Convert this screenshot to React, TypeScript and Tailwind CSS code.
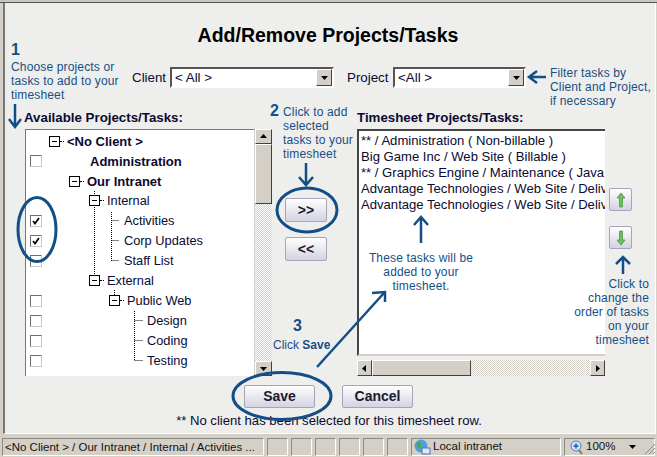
import React from "react";

const treeRows = [
  { label: "<No Client >", bold: true, box: false, checked: false, expander: true, indent: "ml-[7px]" },
  { label: "Administration", bold: true, box: true, checked: false, expander: false, indent: "ml-[48px]" },
  { label: "Our Intranet", bold: true, box: false, checked: false, expander: true, indent: "ml-[27px]" },
  { label: "Internal", bold: false, box: false, checked: false, expander: true, indent: "ml-[47px]" },
  { label: "Activities", bold: false, box: true, checked: true, expander: false, indent: "ml-[82px]" },
  { label: "Corp Updates", bold: false, box: true, checked: true, expander: false, indent: "ml-[82px]" },
  { label: "Staff List", bold: false, box: true, checked: false, expander: false, indent: "ml-[82px]" },
  { label: "External", bold: false, box: false, checked: false, expander: true, indent: "ml-[47px]" },
  { label: "Public Web", bold: false, box: true, checked: false, expander: true, indent: "ml-[67px]" },
  { label: "Design", bold: false, box: true, checked: false, expander: false, indent: "ml-[105px]" },
  { label: "Coding", bold: false, box: true, checked: false, expander: false, indent: "ml-[105px]" },
  { label: "Testing", bold: false, box: true, checked: false, expander: false, indent: "ml-[105px]" },
  { label: "Advantage Technologies", bold: true, box: false, checked: false, expander: false, indent: "ml-[28px]" },
];

const timesheetRows = [
  "** / Administration ( Non-billable )",
  "Big Game Inc / Web Site ( Billable )",
  "** / Graphics Engine / Maintenance ( Java",
  "Advantage Technologies / Web Site / Delivery",
  "Advantage Technologies / Web Site / Delivery",
];

const raised = "border border-t-white border-l-white border-r-[#404040] border-b-[#404040] bg-[#d4d0c8]";
const track = "bg-[repeating-conic-gradient(#d4d0c8_0%_25%,#ffffff_0%_50%)] bg-[length:2px_2px]";
const note = "absolute text-[12px] leading-[14px] tracking-[0.15px] text-[#164f86]";
const sunken = "border border-t-[#8a8a84] border-l-[#8a8a84] border-r-white border-b-white";

function Triangle({ dir }: { dir: "up" | "down" | "left" | "right" }) {
  const points = {
    up: "1,6 8,6 4.5,2",
    down: "1,3 8,3 4.5,7",
    left: "6,1 6,8 2,4.5",
    right: "3,1 3,8 7,4.5",
  }[dir];
  return (
    <svg width="9" height="9" viewBox="0 0 9 9">
      <polygon points={points} fill="#000" />
    </svg>
  );
}

function Select({ label, className }: { label: string; className: string }) {
  return (
    <div className={`flex h-[21px] items-center border-2 border-t-[#555] border-l-[#555] border-r-white border-b-white bg-white ${className}`}>
      <span className="flex-1 pl-[3px] text-[13.33px] leading-none">{label}</span>
      <div className={`flex h-[17px] w-[16px] items-center justify-center ${raised}`}>
        <Triangle dir="down" />
      </div>
    </div>
  );
}

function Checkbox({ checked }: { checked: boolean }) {
  return (
    <div className="flex h-3 w-3 items-center justify-center border border-t-[#6f6f6f] border-l-[#6f6f6f] border-r-[#c8c8c8] border-b-[#c8c8c8] bg-white">
      {checked && (
        <svg width="8" height="8" viewBox="0 0 8 8">
          <path d="M1 4 L3 6.5 L7 1" fill="none" stroke="#000" strokeWidth="1.7" />
        </svg>
      )}
    </div>
  );
}

function Expander() {
  return (
    <div className="relative mr-[7px] flex h-[11px] w-[11px] shrink-0 items-center justify-center border border-black bg-white">
      <div className="h-px w-[5px] bg-black" />
      <div className="absolute left-[10px] top-1 w-[4px] border-t border-dotted border-black" />
    </div>
  );
}

function PushButton({ label, className }: { label: string; className: string }) {
  return (
    <div className={`flex items-center justify-center rounded-[2px] border border-[#a5a5ba] bg-gradient-to-b from-white to-[#d3d3e2] text-[#1a1a2e] ${className}`}>
      {label}
    </div>
  );
}

function MoveButton({ up }: { up: boolean }) {
  return (
    <div className="flex h-[23px] w-[23px] items-center justify-center rounded-[2px] border border-[#a5a5ba] bg-gradient-to-b from-white to-[#d3d3e2]">
      <svg width="10" height="16" viewBox="0 0 10 16">
        <path
          d={up ? "M5 1 L9 6 L6.5 6 L6.5 15 L3.5 15 L3.5 6 L1 6 Z" : "M5 15 L9 10 L6.5 10 L6.5 1 L3.5 1 L3.5 10 L1 10 Z"}
          fill="#6fc05a"
          stroke="#3f8f3a"
          strokeWidth="0.7"
        />
      </svg>
    </div>
  );
}

function Annotations() {
  const stroke = "#134f86";
  return (
    <svg className="pointer-events-none absolute inset-0" width="657" height="457" fill="none" stroke={stroke}>
      <g strokeWidth="3">
        <ellipse cx="37" cy="229.5" rx="19" ry="32" />
        <ellipse cx="307" cy="210" rx="30" ry="22" />
        <ellipse cx="282" cy="396" rx="49" ry="23.5" />
      </g>
      <g strokeWidth="2.5">
        <path d="M15 104 V126 M9 119 L15 127 L21 119" />
        <path d="M306 163 V184 M299 177 L306 185 L313 177" />
        <path d="M546 77 H530 M537 71 L529 77 L537 83" />
        <path d="M421 243 V219 M414 225 L421 217 L428 225" />
        <path d="M623 274 V259 M616 264 L623 257 L630 264" />
        <path d="M317 367 L384 293 M372 293 L385 292 L385 302" />
      </g>
    </svg>
  );
}

export default function App() {
  return (
    <div className="relative flex h-[457px] w-[657px] flex-col overflow-hidden bg-[#d4d0c8] font-['Liberation_Sans',sans-serif] text-[#0a0a30]">
      <div className="h-[2px] bg-[#c9c6bd]" />
      <div className="h-px bg-[#555]" />

      {/* CONTENT */}
      <div className="ml-[3px] mr-[1px] flex h-[431px] flex-col border-l-2 border-r border-b border-l-[#777] border-r-white border-b-white bg-[#eeeeec]">
        <h1 className="mt-[20px] h-6 pr-[4px] text-center text-[19.5px] font-bold leading-6 text-black">
          Add/Remove Projects/Tasks
        </h1>

        {/* FILTROS */}
        <div className="mt-[20px] flex h-[21px] items-center pl-[127px] text-[13.33px]">
          <span className="w-[38px]">Client</span>
          <Select label="< All >" className="w-[164px]" />
          <span className="ml-[13px] w-[46px]">Project</span>
          <Select label="<All >" className="w-[133px]" />
        </div>

        {/* LISTAS */}
        <div className="mt-[21px] flex pl-[20px]">
          <div className="w-[247px]">
            <div className="-ml-px h-5 pt-px text-[13.3px] font-bold leading-[15px]">Available Projects/Tasks:</div>
            <div className="flex h-[247px]">
              <div className="relative w-[230px] overflow-hidden border border-b-0 border-t-[#777] border-l-[#777] border-r-[#d4d0c8] bg-white pt-px">
                <svg className="absolute left-0 top-0" width="230" height="247" fill="none" stroke="#000" strokeDasharray="1 1">
                  <path d="M68.5 61 V146" />
                  <path d="M85.5 82 V131 M85.5 90.5 H93 M85.5 110.5 H93 M85.5 130.5 H93" />
                  <path d="M88.5 160 V165" />
                  <path d="M108.5 181 V231 M108.5 190.5 H117 M108.5 210.5 H117 M108.5 230.5 H117" />
                </svg>
                {treeRows.map((row) => (
                  <div key={row.label} className="relative flex h-5 items-center pl-1 leading-none">
                    <div className="w-3">{row.box && <Checkbox checked={row.checked} />}</div>
                    <div className={`flex items-center ${row.indent}`}>
                      {row.expander && <Expander />}
                      <span className={row.bold ? "text-[13px] font-bold" : "text-[12.8px]"}>{row.label}</span>
                    </div>
                  </div>
                ))}
              </div>
              <div className={`flex w-[17px] flex-col ${track}`}>
                <div className={`flex h-[15px] items-center justify-center ${raised}`}><Triangle dir="up" /></div>
                <div className={`h-[60px] ${raised}`} />
                <div className="flex-1" />
                <div className={`flex h-[15px] items-center justify-center ${raised}`}><Triangle dir="down" /></div>
              </div>
            </div>
          </div>

          <div className="flex w-[85px] flex-col items-start pl-[13px] pt-[89px] text-[14px] font-bold">
            <PushButton label=">>" className="h-[24px] w-[42px]" />
            <PushButton label="<<" className="mt-[15px] h-[24px] w-[42px]" />
          </div>

          <div className="w-[248px]">
            <div className="h-5 pt-px text-[13.3px] font-bold leading-[15px]">Timesheet Projects/Tasks:</div>
            <div className="h-[227px] w-[248px] overflow-hidden border-2 border-r-0 border-t-[#444] border-l-[#444] border-b-[#d4d0c8] bg-white pl-[2px] pt-[2px]">
              {timesheetRows.map((row, i) => (
                <div key={i} className="h-4 whitespace-nowrap text-[13.1px] leading-4">{row}</div>
              ))}
            </div>
            <div className={`mt-[4px] flex h-4 w-[248px] ${track}`}>
              <div className={`flex w-[15px] items-center justify-center ${raised}`}><Triangle dir="left" /></div>
              <div className={`w-[99px] ${raised}`} />
              <div className="flex-1" />
              <div className={`flex w-[15px] items-center justify-center ${raised}`}><Triangle dir="right" /></div>
            </div>
          </div>

          <div className="ml-[4px] flex flex-col gap-[15px] pt-[79px]">
            <MoveButton up />
            <MoveButton up={false} />
          </div>
        </div>

        {/* BOTOES */}
        <div className="mt-[9px] flex pl-[239px] text-[14px] font-bold">
          <PushButton label="Save" className="h-[23px] w-[71px]" />
          <PushButton label="Cancel" className="ml-[27px] h-[23px] w-[71px]" />
        </div>
        <p className="mt-[5px] pr-[2px] text-center text-[13.1px] leading-4">
          ** No client has been selected for this timesheet row.
        </p>
      </div>

      {/* STATUS */}
      <div className="relative flex flex-1 items-center gap-[3px] pl-[2px] pt-[3px] text-[11.5px] text-[#111]">
        <div className={`h-[18px] w-[262px] truncate pl-[2px] leading-4 ${sunken}`}>
          {"<No Client > / Our Intranet / Internal / Activities ..."}
        </div>
        {[0, 1, 2, 3, 4, 5].map((n) => (
          <div key={n} className={`h-[18px] w-[21px] ${sunken}`} />
        ))}
        <div className={`flex h-[18px] w-[150px] items-center pl-[1px] ${sunken}`}>
          <svg width="18" height="17" viewBox="0 0 18 17" className="mr-[2px]">
            <circle cx="8" cy="7" r="6.5" fill="#4f9fe0" />
            <path d="M3 4 Q7 2 8 5 T5 10 Z" fill="#4fa64a" />
            <rect x="9" y="9" width="8" height="6" fill="#dfe8f4" stroke="#5577aa" />
          </svg>
          Local intranet
        </div>
        <div className={`flex h-[18px] w-[91px] items-center pl-[5px] ${sunken}`}>
          <svg width="13" height="15" viewBox="0 0 13 15" className="mr-[3px]">
            <path d="M8 9 L12 14" stroke="#a66a2c" strokeWidth="2" />
            <circle cx="6" cy="6" r="5" fill="#cfe3f7" stroke="#5b7fb5" />
            <path d="M3.5 6 H8.5 M6 3.5 V8.5" stroke="#1f5fbf" strokeWidth="1.6" />
          </svg>
          100%
          <svg width="7" height="4" viewBox="0 0 7 4" className="ml-[14px]">
            <polygon points="0,0 7,0 3.5,4" fill="#000" />
          </svg>
        </div>
        <svg className="absolute bottom-[2px] right-[1px]" width="12" height="12" viewBox="0 0 12 12" fill="none" stroke="#8a8a84">
          <path d="M1 11 L11 1 M5 11 L11 5 M9 11 L11 9" />
        </svg>
      </div>

      {/* ANOTACOES */}
      <Annotations />
      <div className="absolute left-[11px] top-[42px] text-[16px] font-bold leading-[16px] text-[#164f86]">1</div>
      <div className={`${note} left-[11px] top-[60px]`}>
        Choose projects or<br />tasks to add to your<br />timesheet
      </div>
      <div className="absolute left-[270px] top-[103px] text-[16px] font-bold leading-[16px] text-[#164f86]">2</div>
      <div className={`${note} left-[283px] top-[105px] leading-[14.7px]`}>
        Click to add<br />selected<br />tasks to your<br />timesheet
      </div>
      <div className="absolute left-[293px] top-[318px] text-[16px] font-bold leading-[16px] text-[#164f86]">3</div>
      <div className={`${note} left-[273px] top-[338px] tracking-normal`}>
        Click <b>Save</b>
      </div>
      <div className={`${note} left-[550px] top-[66px]`}>
        Filter tasks by<br />Client and Project,<br />if necessary
      </div>
      <div className={`${note} left-[361px] top-[251px] w-[120px] text-center`}>
        These tasks will be<br />added to your<br />timesheet.
      </div>
      <div className={`${note} right-[8px] top-[277px] text-right leading-[14.3px]`}>
        Click to<br />change the<br />order of tasks<br />on your<br />timesheet
      </div>
    </div>
  );
}
